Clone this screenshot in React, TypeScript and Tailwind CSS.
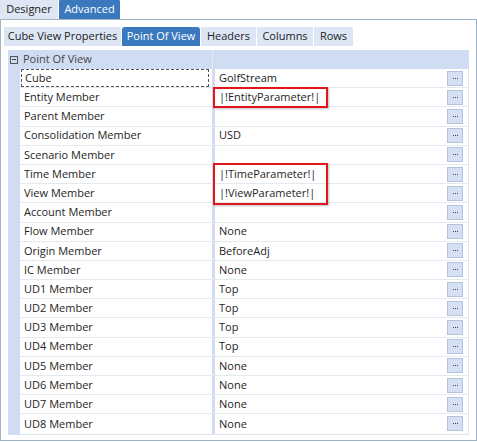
import { useState } from 'react';

const rows: { name: string; value: string }[] = [
  { name: 'Cube', value: 'GolfStream' },
  { name: 'Entity Member', value: '|!EntityParameter!|' },
  { name: 'Parent Member', value: '' },
  { name: 'Consolidation Member', value: 'USD' },
  { name: 'Scenario Member', value: '' },
  { name: 'Time Member', value: '|!TimeParameter!|' },
  { name: 'View Member', value: '|!ViewParameter!|' },
  { name: 'Account Member', value: '' },
  { name: 'Flow Member', value: 'None' },
  { name: 'Origin Member', value: 'BeforeAdj' },
  { name: 'IC Member', value: 'None' },
  { name: 'UD1 Member', value: 'Top' },
  { name: 'UD2 Member', value: 'Top' },
  { name: 'UD3 Member', value: 'Top' },
  { name: 'UD4 Member', value: 'Top' },
  { name: 'UD5 Member', value: 'None' },
  { name: 'UD6 Member', value: 'None' },
  { name: 'UD7 Member', value: 'None' },
  { name: 'UD8 Member', value: 'None' },
];

const innerTabs = [
  { label: 'Cube View Properties', w: 'w-[117px]' },
  { label: 'Point Of View', w: 'w-[78px]' },
  { label: 'Headers', w: 'w-[55px]' },
  { label: 'Columns', w: 'w-[56px]' },
  { label: 'Rows', w: 'w-[39px]' },
];

function EllipsisButton() {
  return (
    <div className="w-[16px] h-[15px] bg-[#d5e0f5] border border-[#b4c3dc] flex items-center justify-center gap-[1px]">
      <div className="w-[1px] h-[1px] bg-[#445]" />
      <div className="w-[1px] h-[1px] bg-[#445]" />
      <div className="w-[1px] h-[1px] bg-[#445]" />
    </div>
  );
}

export default function App() {
  const [tab, setTab] = useState('Point Of View');

  return (
    <div
      className="relative w-[477px] h-[442px] bg-white text-[11px] text-[#1e1e1e] overflow-hidden"
      style={{ fontFamily: '"Open Sans", "Noto Sans", sans-serif' }}
    >
      {/* top tabs */}
      <div className="flex h-[19px] items-end">
        <div className="h-[19px] w-[58px] bg-[#dee7f3] flex items-center justify-center text-[#222]">
          Designer
        </div>
        <div className="h-[20px] w-[61px] ml-[1px] bg-[#3b79bf] rounded-t-[3px] flex items-center justify-center text-white">
          Advanced
        </div>
      </div>

      <div className="h-[422px] border border-[#a3b3c6] flex flex-col">
        {/* inner tabs */}
        <div className="flex gap-[1px] pl-[3px] pt-[7px] h-[27px]">
          {innerTabs.map((t) => {
            const active = t.label === tab;
            return (
              <button
                key={t.label}
                type="button"
                onClick={() => setTab(t.label)}
                className={`${t.w} h-[19px] flex items-center justify-center ${
                  active
                    ? 'bg-[#3b79bf] text-white rounded-t-[3px]'
                    : 'bg-[#dde6f4] text-[#222]'
                }`}
              >
                {t.label}
              </button>
            );
          })}
        </div>

        {/* property grid */}
        <div className="mx-[7px] mt-[3px] flex flex-col">
          <div className="h-[19px] bg-[#cfdcf2] flex items-center">
            <div className="w-[12px] flex justify-center">
              <div className="w-[8px] h-[8px] border border-[#555] flex items-center justify-center">
                <div className="w-[4px] h-[1px] bg-[#444]" />
              </div>
            </div>
            <div className="w-[192px] pl-[3px] text-[#444]">Point Of View</div>
            <div className="w-[1px] h-full bg-[#e3eaf6]" />
          </div>

          <div className="flex">
            <div className="w-[12px] bg-[#cfdcf2]" />
            <div className="flex-1 border-r border-b border-[#dde4ee]">
              {rows.map((r, i) => (
                <div
                  key={r.name}
                  className={`flex h-[19.2px] ${i < rows.length - 1 ? 'border-b border-[#e3e9f1]' : ''}`}
                >
                  <div className="w-[192px] flex items-center pl-[4px]">
                    {i === 0 ? (
                      <div className="w-full h-full flex items-center pl-[3px] -ml-[3px] border border-dashed border-[#555]">
                        {r.name}
                      </div>
                    ) : (
                      r.name
                    )}
                  </div>
                  <div className="w-[3px] bg-[#d3ddef]" />
                  <div className="flex-1 flex items-center pl-[4px] pr-[5px]">
                    <span className="flex-1">{r.value}</span>
                    <EllipsisButton />
                  </div>
                </div>
              ))}
            </div>
          </div>
        </div>
      </div>

      {/* highlight boxes */}
      <div className="absolute left-[213px] top-[87px] w-[115px] h-[21px] border-2 border-[#e0161c] shadow-[1px_1px_2px_rgba(0,0,0,0.25)]" />
      <div className="absolute left-[213px] top-[163px] w-[115px] h-[42px] border-2 border-[#e0161c] shadow-[1px_1px_2px_rgba(0,0,0,0.25)]" />
    </div>
  );
}
